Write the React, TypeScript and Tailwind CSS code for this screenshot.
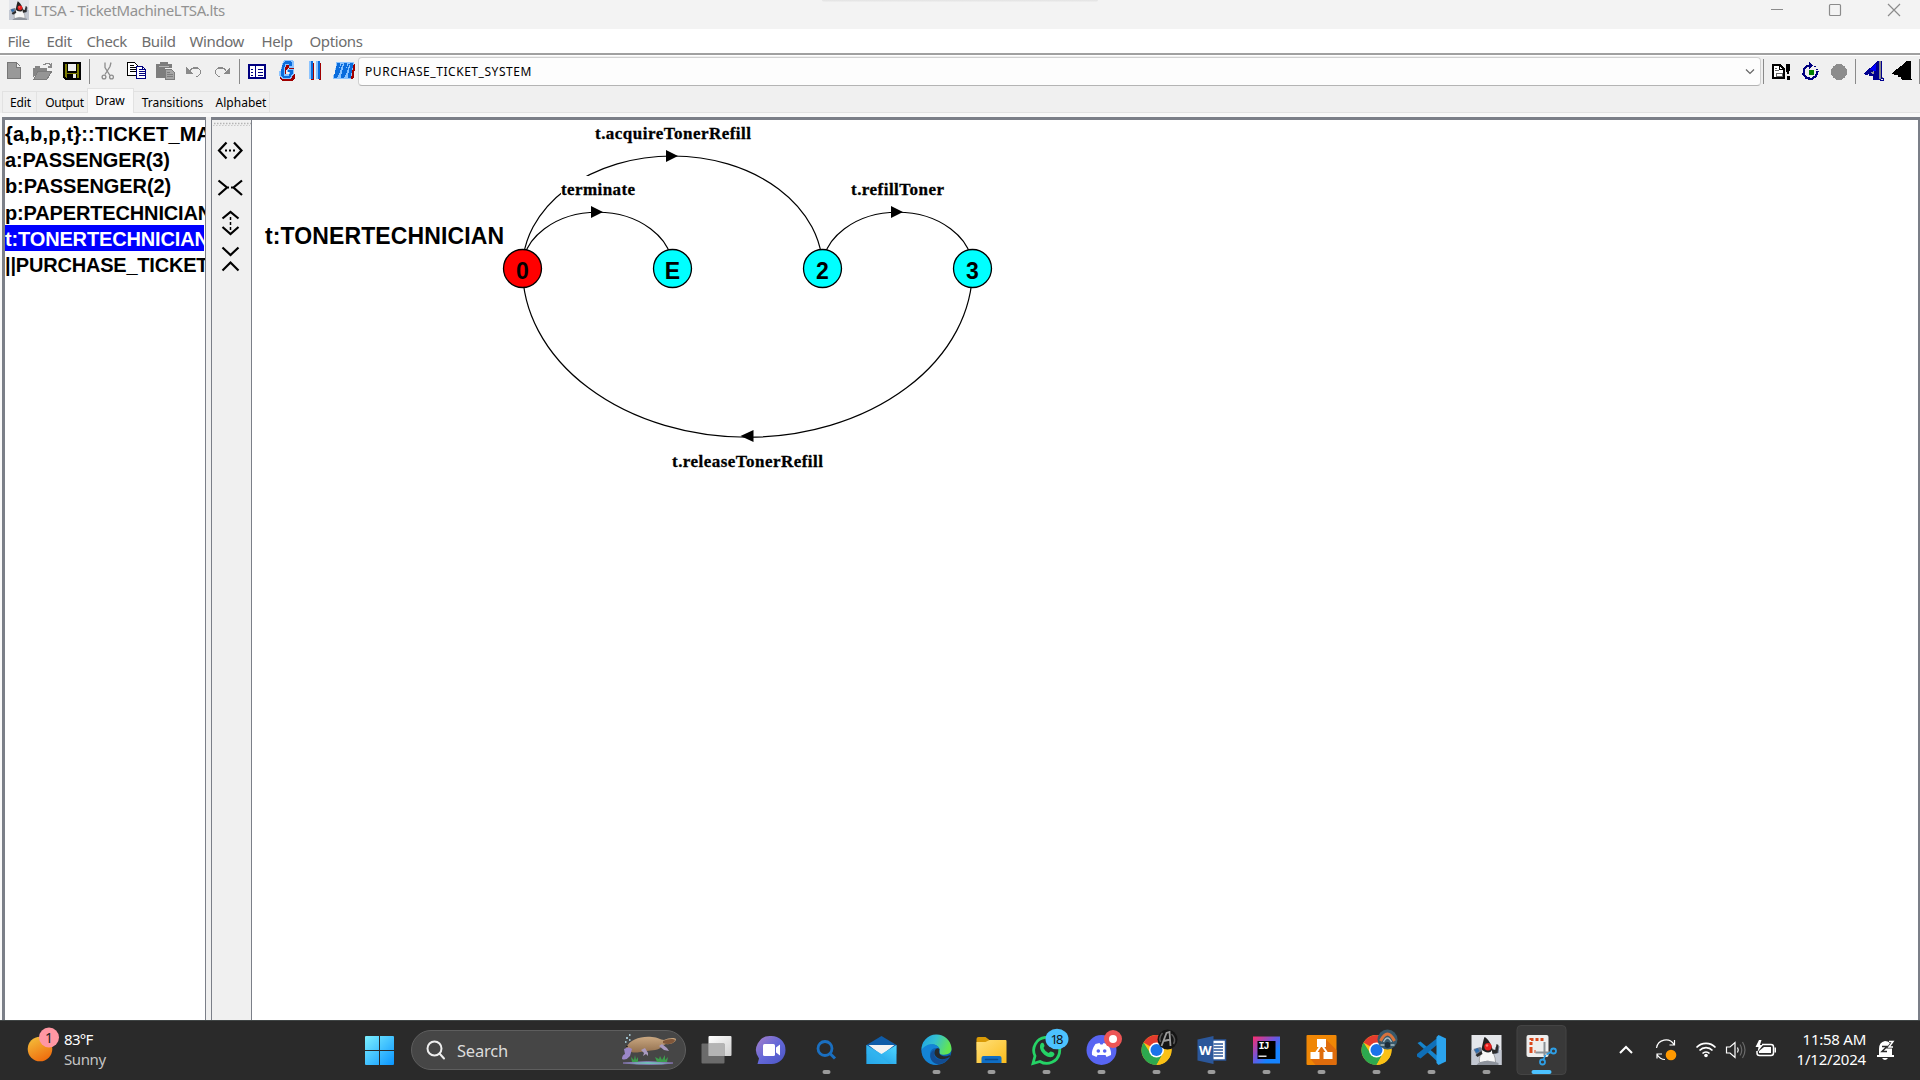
import React from "react";

type SlotProps = { x: number; w: number; children?: React.ReactNode };

// Toolbar cell; drawing units are window pixels, the bar spans y 56-88.
const Cell = ({ x, w, children }: SlotProps) => (
  <svg className="shrink-0" width={w} height={32} viewBox={`${x} 56 ${w} 32`} shapeRendering="crispEdges">
    {children}
  </svg>
);

const Sep = ({ x, w, at }: { x: number; w: number; at: number }) => (
  <Cell x={x} w={w}>
    <rect x={at} y={59} width={1} height={25} fill="#8a8a8a" />
  </Cell>
);

const menus: [string, string][] = [
  ["File", "w-[39px]"],
  ["Edit", "w-[40px]"],
  ["Check", "w-[55px]"],
  ["Build", "w-[48px]"],
  ["Window", "w-[72px]"],
  ["Help", "w-[48px]"],
  ["Options", "w-[60px]"],
];

const processes: [string, string][] = [
  ["{a,b,p,t}::TICKET_MACHINE", "leading-[26px] tracking-[0.2px]"],
  ["a:PASSENGER(3)", "leading-[26px] tracking-[-0.1px]"],
  ["b:PASSENGER(2)", "leading-[27px] tracking-[-0.1px]"],
  ["p:PAPERTECHNICIAN", "leading-[28px] tracking-[-0.15px]"],
  ["t:TONERTECHNICIAN", "leading-[28px] tracking-[-0.15px]"],
  ["||PURCHASE_TICKET_SYSTEM", "leading-[28px] tracking-[-0.2px]"],
];

function Duke() {
  return (
    <>
      <rect x={0} y={0} width={30} height={30} fill="#e4e6ea" />
      <rect x={0} y={15} width={30} height={15} fill="#c3c8d2" />
      <path d="M2 14l7-2 2 5-6 3zM24 12l4-1-1 7-4 1z" fill="#6f7c92" />
      <path d="M3 15l3-2 2 3-3 2z" fill="#2f6fb0" />
      <path d="M11 13c-1 6-4 9-3 14 3 2 6-1 8-1s6 3 8 1c0-6-3-9-4-14z" fill="#f7f7f7" stroke="#777" strokeWidth={0.6} />
      <path d="M13 2c1 0 6 4 8 12l-2 3c-3 1-7 0-9-3 1-3 1-6 3-12z" fill="#222" />
      <path d="M10 16l-6 4 2 2 5-3zM20 14l4 1 1-6 2 1-1 8-5 1z" fill="#2b2b2b" />
      <circle cx={16.5} cy={11.8} r={3.7} fill="#e8201e" />
      <circle cx={15.5} cy={10.5} r={1.2} fill="#ff7a70" />
      <path d="M7 28c5-3 15-2 20 0v2H5z" fill="#8e939c" />
    </>
  );
}

function Toolbar() {
  return (
    <div className="flex h-8 bg-[#f0f0f0]">
      <Cell x={0} w={28}>
        <path d="M7 62h9v5h5v12H7z" fill="#999" />
        <path d="M16.500 62.500l4 4M7.500 62.500h9v4.500h4v11.500h-13z" fill="none" stroke="#777" />
      </Cell>
      <Cell x={28} w={30}>
        <path d="M33 68h2v-2h5v2h7v4h-9l-5 6z" fill="#858585" />
        <path d="M38 71h14l-5 8H34z" fill="#959595" stroke="#7c7c7c" />
        <path d="M43 64.500h2v-1.500h4v1.500h1.500v2h-3M51.500 63v4h-4" fill="none" stroke="#8a8a8a" />
      </Cell>
      <Cell x={58} w={28}>
        <path d="M63 62h18v18H65l-2-2z" fill="#000" />
        <path d="M65 64h2v9h10v-9h2v14H66l-1-1z" fill="#7c7c00" />
        <rect x={68} y={64} width={8} height={7} fill="#f0f0f0" />
        <rect x={67} y={74} width={10} height={4} fill="#000" />
        <rect x={73} y={74} width={3} height={4} fill="#e8e8e8" />
      </Cell>
      <Sep x={86} w={8} at={89} />
      <Cell x={94} w={27}>
        <g fill="none" stroke="#8c8c8c" strokeWidth={1.300} shapeRendering="auto">
          <path d="M105 62.500v5l5 8M111 62.500l-1 4-5 8" />
          <circle cx={104} cy={77} r={1.900} />
          <circle cx={111.500} cy={77} r={1.900} />
        </g>
      </Cell>
      <Cell x={121} w={30}>
        <path d="M127.500 62.500h7l3 3v10h-10z" fill="#fff" stroke="#000" />
        <path d="M129.500 65.500h4M129.500 67.500h6M129.500 69.500h6M129.500 71.500h6" stroke="#000" />
        <path d="M136.500 66.500h6l3 3v9h-9z" fill="#fff" stroke="#000080" />
        <path d="M142.500 66.500v3h3M138.500 69.500h3M138.500 71.500h6M138.500 73.500h6M138.500 75.500h6" stroke="#000080" fill="none" />
      </Cell>
      <Cell x={151} w={29}>
        <path d="M156 64h4v-2h8v2h4v4h-7v10h-9z" fill="#7d7d7d" />
        <path d="M159 66.500h10" stroke="#b5b5b5" />
        <path d="M165.500 69.500h6l3 3v7h-9z" fill="#a5a5a5" stroke="#7d7d7d" />
        <path d="M167 72.500h3M167 74.500h6M167 76.500h6" stroke="#7d7d7d" />
      </Cell>
      <Cell x={180} w={28}>
        <path d="M186 67v7h7l-2.500-2.500z" fill="#8a8a8a" />
        <path d="M190 70.500l3-2.500h5l2.500 2.500v3l-3 3h-1.500" fill="none" stroke="#8a8a8a" strokeWidth={1.200} />
      </Cell>
      <Cell x={208} w={27}>
        <path d="M230 67v7h-7l2.500-2.500z" fill="#8a8a8a" />
        <path d="M226 70.500l-3-2.500h-5l-2.500 2.500v3l3 3h1.500" fill="none" stroke="#8a8a8a" strokeWidth={1.200} />
      </Cell>
      <Sep x={235} w={8} at={239} />
      <Cell x={243} w={29}>
        <rect x={249} y={65} width={16} height={13} fill="#fff" stroke="#000080" strokeWidth={2} />
        <path d="M255.500 66v12" stroke="#000080" />
        <path d="M251 69.500h2M251 72.500h2M251 75.500h2M258 69.500h5M258 72.500h5M258 75.500h5" stroke="#000080" />
      </Cell>
      <Cell x={272} w={29}>
        <path d="M286 62h8v8h-5v-3l-3 3v6h4v-2h5v4l-3 3h-10l-2-3z" fill="#a00000" />
        <path d="M284 60h8l2 2v6h-5v-3h-3l-1 4v5h4v-2h-2v-3h7v5l-3 5h-9l-3-3v-5h2l1-7z" fill="#8cc4ff" />
        <path d="M285 61h6l1 2v3h-3v-2h-4l-1 6v6h5l1-4h-2v-2h5v3l-3 5h-7l-2-3v-4l2-8z" fill="#0a6cdc" />
      </Cell>
      <Cell x={301} w={25}>
        <path d="M311 63h3v17h-3zM319 63h2v17h-2z" fill="#a00000" />
        <path d="M309 61h4v18h-4zM316 61h4v18h-4z" fill="#8cc4ff" />
        <path d="M311 61h2v18h-2zM318 61h2v18h-2z" fill="#0a6cdc" />
      </Cell>
      <Cell x={326} w={32}>
        <path d="M334 78h19l2-14h-2l-2 14h-17z" fill="#a00000" stroke="#a00000" />
        <path d="M336 62h18l-3 17h-18v-4h2z" fill="#8cc4ff" />
        <path d="M339 63l-4 15M346 63l-4 15M352 63l-3 15" stroke="#0a6cdc" strokeWidth={3} />
        <path d="M337 77l5-13M344 77l5-13" stroke="#0a6cdc" strokeWidth={1.500} />
      </Cell>
      <div className="mt-px flex h-[29px] w-[1403px] shrink-0 items-center justify-between rounded-sm border border-[#d0d0d0] border-b-[#b4b4b4] bg-[#fdfdfd] pl-[6px] pr-[5px]">
        <span className="font-['Noto_Sans'] text-[12px] leading-none tracking-[0.55px] text-black">PURCHASE_TICKET_SYSTEM</span>
        <svg width={10} height={7} viewBox="0 0 10 7" fill="none" stroke="#666" strokeWidth={1.200}>
          <path d="M1 1.500l4 4 4-4" />
        </svg>
      </div>
      <Sep x={1761} w={6} at={1763} />
      <Cell x={1767} w={29}>
        <path d="M1773 65h7l4 4v9h-11z" fill="#fff" stroke="#000" strokeWidth={1.800} />
        <path d="M1779.500 65v4h4" fill="none" stroke="#000" />
        <path d="M1775 68.500h2M1775 70.500h4M1776 73.500h6v3h-6z" fill="none" stroke="#666" />
        <path d="M1786.500 64h3.500v5l-1 5h-2l-1-5zM1786.500 76h3.500v4h-3.500z" fill="#000" />
      </Cell>
      <Cell x={1796} w={29}>
        <path d="M1806 66.500l-2 3-.5 5 3 3.500 5 1 4.500-3 1.500-5" fill="none" stroke="#000080" strokeWidth={2.300} />
        <path d="M1809 61l4 4.500-4 3.500v-2.500h-3v-2h3z" fill="#000080" />
        <path d="M1814 66h2v1h-2zM1816 69h2v1h-2z" fill="#000080" />
        <circle cx={1811.500} cy={72.500} r={2.700} fill="#008000" />
      </Cell>
      <Cell x={1825} w={27}>
        <circle cx={1839} cy={72} r={8} fill="#8c8c8c" />
      </Cell>
      <Sep x={1852} w={7} at={1855} />
      <Cell x={1859} w={29}>
        <path d="M1877 61h5v16l2 2h-7z" fill="#888" />
        <path d="M1877 61h2v18h2v1h-8v-4h-4v-2l-2 1-4-1 7-6z" fill="#000090" />
        <path d="M1876 63v8l-6-1z" fill="#0000ff" />
        <path d="M1870 73l4-2v3z" fill="#999" />
        <path d="M1881.500 61v17h2v2h-4" fill="none" stroke="#000090" />
      </Cell>
      <Cell x={1888} w={29}>
        <path d="M1907 61h4v16l1 3h-10l-1-3h-3v-2h-3l-3-1v-1l9-7z" fill="#000" />
      </Cell>
      <Sep x={1917} w={3} at={1919} />
    </div>
  );
}

function Diagram() {
  const arc = { fill: "none", stroke: "#000", strokeWidth: 1.2 };
  const nodes: [number, string, string][] = [
    [522.5, "0", "#ff0000"],
    [672.5, "E", "#00ffff"],
    [822.5, "2", "#00ffff"],
    [972.5, "3", "#00ffff"],
  ];
  const serif = "font-['Liberation_Serif',serif] font-bold text-[17px] stroke-black stroke-[0.3px]";
  return (
    <svg width={1666} height={900} viewBox="252 120 1666 900" className="block">
      <path d="M522.5 268.500A150 112.500 0 0 1 822.5 268.500" {...arc} />
      <rect x={561} y={176} width={75} height={22} fill="#fff" />
      <path d="M522.5 268.500A75 56.250 0 0 1 672.5 268.500M822.5 268.500A75 56.250 0 0 1 972.5 268.500M522.5 268.500A225 168.750 0 0 0 972.5 268.500" {...arc} />
      <path d="M666 150v12l12-6zM591 206v12l12-6zM891 206v12l12-6zM753.500 430v12l-13-6z" />
      {nodes.map(([x, label, fill]) => (
        <g key={label}>
          <circle cx={x} cy={268.500} r={19} fill={fill} stroke="#000" strokeWidth={1.300} />
          <text x={x} y={278.500} textAnchor="middle" className="font-['Liberation_Sans',sans-serif] text-[23px] font-bold">
            {label}
          </text>
        </g>
      ))}
      <text x={265} y={244} textLength={239} className="font-['Liberation_Sans',sans-serif] text-[23px] font-bold">
        t:TONERTECHNICIAN
      </text>
      <text x={595} y={139} textLength={156} className={serif}>t.acquireTonerRefill</text>
      <text x={561} y={195} textLength={74} className={serif}>terminate</text>
      <text x={851} y={195} textLength={93} className={serif}>t.refillToner</text>
      <text x={672} y={467} textLength={151} className={serif}>t.releaseTonerRefill</text>
    </svg>
  );
}

// Taskbar cell, 55px wide, with its origin at the centre of the icon.
const App55 = ({ dot, active, children }: { dot?: boolean; active?: boolean; children?: React.ReactNode }) => (
  <svg className="shrink-0" width={55} height={60} viewBox="-27.5 -30 55 60">
    {active && <rect x={-24.500} y={-24.500} width={49} height={49} rx={4} fill="#393939" stroke="#444" />}
    {children}
    {dot && <rect x={-4} y={20} width={8} height={4} rx={2} fill="#9b9b9b" />}
    {active && <rect x={-10} y={20} width={20} height={4} rx={2} fill="#4cc2ff" />}
  </svg>
);

const Chrome = () => (
  <>
    <circle r={15} fill="#fbc116" />
    <path d="M0 0L-13 -7.500A15 15 0 0 1 13 -7.500L13 -7H0z" fill="#e33b2e" />
    <path d="M-13 -7.500A15 15 0 0 0 0 15L6.500 3.500 0 0-6 3.500z" fill="#2da94f" />
    <path d="M13 -7.500A15 15 0 0 1 0 15L6.500 3.500 6 -7.500z" fill="#fbc116" />
    <circle r={7.500} fill="#fff" />
    <circle r={6} fill="#1a73e8" />
  </>
);

function Taskbar() {
  return (
    <div className="flex h-[60px] shrink-0 border-t border-[#3f4444] bg-[#2a2a2a] text-white">
      <svg width={0} height={0} className="absolute">
        <defs>
          <linearGradient id="win" x1="0" y1="0" x2="1" y2="1"><stop stopColor="#7cf0ff" /><stop offset="1" stopColor="#0a95ff" /></linearGradient>
          <linearGradient id="sun" x1="0.200" y1="0" x2="0.700" y2="1"><stop stopColor="#f3bd3a" /><stop offset="1" stopColor="#ef6a0c" /></linearGradient>
          <linearGradient id="chat" x1="0" y1="0" x2="1" y2="1"><stop stopColor="#a87fc8" /><stop offset="0.500" stopColor="#6468d8" /><stop offset="1" stopColor="#4a55c4" /></linearGradient>
          <linearGradient id="edge" x1="0" y1="0" x2="1" y2="0.300"><stop stopColor="#1ba0e8" /><stop offset="0.500" stopColor="#35c1d0" /><stop offset="1" stopColor="#62e552" /></linearGradient>
          <linearGradient id="fold" x1="0" y1="0" x2="1" y2="1"><stop stopColor="#ffe07a" /><stop offset="1" stopColor="#fbbc1c" /></linearGradient>
          <linearGradient id="mail" x1="0" y1="1" x2="1" y2="0"><stop stopColor="#1590e0" /><stop offset="1" stopColor="#50d8ff" /></linearGradient>
          <linearGradient id="ij" x1="0" y1="0" x2="1" y2="1"><stop stopColor="#ff2d6c" /><stop offset="0.450" stopColor="#6b57e0" /><stop offset="0.700" stopColor="#1683ff" /></linearGradient>
          <linearGradient id="tv" x1="0" y1="0" x2="1" y2="1"><stop stopColor="#fff" /><stop offset="1" stopColor="#d0d0d0" /></linearGradient>
          <linearGradient id="fur" x1="0" y1="0" x2="0" y2="1"><stop stopColor="#c9a781" /><stop offset="1" stopColor="#93704f" /></linearGradient>
        </defs>
      </svg>
      <svg className="-mt-px shrink-0" width={62} height={60} viewBox="0 1020 62 60">
        <circle cx={40} cy={1049} r={12.300} fill="url(#sun)" />
        <circle cx={49} cy={1037.500} r={10} fill="#ff97a3" />
        <text x={49} y={1043} textAnchor="middle" className="font-['Noto_Sans'] text-[14px]" fill="#222">1</text>
      </svg>
      <div className="w-[290px] shrink-0 pl-[2px] pt-[8px] font-['Noto_Sans'] text-[15px] leading-[20px]">
        <div className="tracking-[-0.7px]">83°F</div>
        <div className="tracking-[-0.4px] text-[#c4c4c4]">Sunny</div>
      </div>
      <svg className="-mt-px shrink-0" width={59} height={60} viewBox="352 1020 59 60">
        <path d="M366 1036h13v14h-14v-13q0-1 1-1zM380 1036h13q1 0 1 1v13h-14zM365 1051h14v14h-13q-1 0-1-1zM380 1051h14v13q0 1-1 1h-13z" fill="url(#win)" />
      </svg>
      <div className="mt-[9px] flex h-10 w-[275px] shrink-0 items-center rounded-full border border-[#5e5e5e] bg-[#464646] pl-[14px]">
        <svg width={20} height={20} viewBox="0 0 20 20" fill="none" stroke="#eee" strokeWidth={2} strokeLinecap="round">
          <circle cx={8.500} cy={8.500} r={7} />
          <path d="M13.500 13.500l4.500 5" />
        </svg>
        <span className="ml-[11px] mt-[2px] font-['Noto_Sans'] text-[16.5px] leading-none tracking-[-0.2px] text-[#dcdcdc]">Search</span>
        <svg className="ml-[113px]" width={56} height={34} viewBox="0 0 56 34">
          <path d="M2 30q24-3 50 0-20 3-50 0z" fill="#6fc2b8" stroke="#8b74b8" strokeWidth={0.800} />
          <path d="M11 29l-1-5 3 3 1-5 1 5 2-3v5zM36 29l-2-5 4 2 1-3 2 4 3-5v5l3-3-1 5z" fill="#3c9c4c" />
          <path d="M5 15C9 6 20 3 31 4c6 0 8 3 12 3 4-2 10-3 12-1 0 3-5 6-10 5l-4 2c-3 5-10 4-15 5-8 1-14 3-17 0z" fill="url(#fur)" />
          <path d="M42 8c4-2 10-3 12-1-1 4-8 5-12 3z" fill="#80573a" />
          <path d="M3 16q5-3 8 0l-2 7q-4 5-8 3 0-4 3-5z" fill="#9b87c8" />
          <path d="M20 17l3 3-1 3 3-2 2 2v-3l-3-5zM38 13l5 4 5 1-2-3-5-4z" fill="#a99ac0" />
          <circle cx={6} cy={13.500} r={0.800} fill="#111" />
          <path d="M5 5h2M8 2h1.500M4 9h1.500M8 7h1.500" stroke="#b9e5f5" strokeWidth={1.600} />
        </svg>
      </div>
      <div className="-mt-px ml-[2.5px] flex shrink-0">
        <App55>
          <rect x={-8} y={-14} width={23} height={20} rx={1} fill="url(#tv)" />
          <rect x={-15} y={-6.500} width={23} height={20} rx={1} fill="#777" opacity={0.850} />
          <rect x={-8} y={-6.500} width={16} height={12.500} fill="#b4b4b4" />
        </App55>
        <App55>
          <path d="M0-14a14 14 0 1 1 0 28H-14l1.500-5.500A14 14 0 0 1 0-14z" fill="url(#chat)" />
          <rect x={-8.500} y={-6} width={12} height={12} rx={1.500} fill="#fff" />
          <path d="M4.500-2.500L8.500-5.500V5.500L4.500 2.500z" fill="#fff" />
        </App55>
        <App55 dot>
          <circle cx={-1.500} cy={-1.500} r={7} fill="none" stroke="#1a6fc0" strokeWidth={2.800} />
          <path d="M3.500 3.500L8.500 8.500" stroke="#1a6fc0" strokeWidth={3} />
        </App55>
        <App55>
          <path d="M-15-5L0-14 15-5V4H-15z" fill="#0f5ca8" />
          <path d="M-13-5H13L0 5z" fill="#f3f3f3" />
          <path d="M-15-5L0 4 15-5V14H-15z" fill="url(#mail)" />
          <path d="M-15-5L8 14H-15z" fill="#34b8f0" opacity={0.600} />
        </App55>
        <App55 dot>
          <circle r={15} fill="#0c62b4" />
          <path d="M-15 0A15 15 0 0 1 15-1C15 3 11 5.500 5 4.500 2 4 4 2 3-1 1-6-6-8-15 0z" fill="url(#edge)" />
          <path d="M-15 0C-10-8 1-7 3-1-3-4-8 1-6 7c1 4 5 7 8 8C-8 16-15 9-15 0z" fill="#1484d6" />
          <path d="M-2 0C-5 9 4 12 13 7.500 8 15-3 17-6 8-7 4-4 0-2 0z" fill="#134d93" />
          <path d="M3-1C0-4-4 2-1 6 3 11 10 9 13 7c2-2 0-2-2-1C6 7 1 5 3-1z" fill="#272a2c" />
        </App55>
        <App55 dot>
          <path d="M-15-11q0-2 2-2h7l4 3H14V0H-15z" fill="#d99a06" />
          <path d="M-15-8h9l4-2H14q1 0 1 1V13H-15z" fill="url(#fold)" />
          <path d="M-10 13V8q0-2 2-2H8q2 0 2 2v5z" fill="#0f6ec4" />
          <path d="M-6 9.500H6" stroke="#084a8c" strokeWidth={1.500} strokeLinecap="round" />
        </App55>
        <App55 dot>
          <path d="M-13.500 13.500L-11.500 6A13 13 0 1 1-6.500 11.500z" fill="none" stroke="#25d366" strokeWidth={2.800} />
          <path d="M-6-6c2-3 4 0 4 2l-1 2c1 2 3 4 5 5l2-1.500c2 0 4 1 4 3-2 4-6 3-9 1S-8-1-6-6z" fill="#25d366" />
          <ellipse cx={10.500} cy={-11} rx={11.500} ry={10.300} fill="#4cc2ff" />
          <text x={10.500} y={-6} textAnchor="middle" className="font-['Noto_Sans'] text-[13px]" fill="#111" textLength={13}>18</text>
        </App55>
        <App55 dot>
          <circle r={15} fill="#5865f2" />
          <path d="M-6-6l4-1 1 1.500h2L2-7l4 1C9-2 10 3 9.500 5L5 7 4 5h-8l-1 2-4.500-2C-10 2-9-2-6-6z" fill="#fff" />
          <circle cx={-3.200} cy={1} r={1.800} fill="#5865f2" />
          <circle cx={3.200} cy={1} r={1.800} fill="#5865f2" />
          <circle cx={11.500} cy={-11} r={9} fill="#ed5555" />
          <circle cx={11.500} cy={-11} r={4} fill="#fff" />
        </App55>
        <App55 dot>
          <Chrome />
          <circle cx={11} cy={-10.500} r={10} fill="#151515" />
          <path d="M5-4l5-13 3-1 1 14M7-9l7-1.500" fill="none" stroke="#9a9a9a" strokeWidth={1.800} />
          <path d="M15-16q5 5 2 10M6-17q-4 5-2 9" fill="none" stroke="#5a5a5a" strokeWidth={1.500} />
        </App55>
        <App55 dot>
          <rect x={-2} y={-10} width={16} height={20} fill="#fff" stroke="#2b579a" strokeWidth={1.500} />
          <path d="M2-6h9.500M2-3h9.500M2 0h9.500M2 3h9.500M2 6h9.500" stroke="#2b579a" strokeWidth={1.500} />
          <path d="M-14-10.500L2-14V14L-14 10.500z" fill="#2b579a" />
          <text x={-6.200} y={5} textAnchor="middle" className="font-['Open_Sans'] text-[13px] font-bold" fill="#fff">W</text>
        </App55>
        <App55 dot>
          <rect x={-13.500} y={-13.500} width={27} height={27} fill="url(#ij)" />
          <rect x={-9} y={-9} width={18} height={18} fill="#000" />
          <text x={-8} y={-1} className="font-['Liberation_Mono'] text-[10px] font-bold" textLength={11} fill="#fff">IJ</text>
          <rect x={-8} y={5.500} width={8} height={1.500} fill="#ddd" />
        </App55>
        <App55 dot>
          <rect x={-15} y={-15} width={30} height={30} rx={1} fill="#f08705" />
          <path d="M4-11l11 11V14q0 1-1 1H-6l-5-6z" fill="#df6c0c" />
          <path d="M-1-4l-6 9M1-4l6 9" stroke="#fff" strokeWidth={2} />
          <path d="M-4.500-11h9v8h-9zM-11 2h9v7h-9zM2 2h9v7H2z" fill="#fff" />
        </App55>
        <App55 dot>
          <Chrome />
          <circle cx={11} cy={-10.500} r={10} fill="#38586a" />
          <path d="M4-9q7-14 14 0" fill="none" stroke="#d8723c" strokeWidth={3} />
          <path d="M7-8q4-8 8 0M4-5h14" fill="none" stroke="#a8bcc4" strokeWidth={1.300} />
          <circle cx={11} cy={-5} r={3} fill="#1e2e3a" />
        </App55>
        <App55 dot>
          <path d="M-14-7L-11-8.500 9 8.500V14.500z" fill="#1684cc" />
          <path d="M-14.500 6.500L-11 8.500 9-8V-14.500L-14.500 4z" fill="#0f6fb8" />
          <path d="M7-15L14.500-11.500V11.500L7 15 5 13V-13z" fill="#2ba4ee" />
        </App55>
        <App55 dot>
          <g transform="translate(-15 -15)"><Duke /></g>
        </App55>
        <App55 active>
          <rect x={-15} y={-15} width={22} height={22} rx={2} fill="#eeeeee" />
          <path d="M-10.500 0V-10.500H3" fill="none" stroke="#d9481c" strokeWidth={3} strokeDasharray="3 2" />
          <path d="M-12 1.500h6" stroke="#d9481c" strokeWidth={3} strokeDasharray="3 2" />
          <path d="M3-8V6M-6 2.500H9" stroke="#8b9196" strokeWidth={2} />
          <circle cx={12} cy={1} r={2.500} fill="none" stroke="#2e9fe6" strokeWidth={1.800} />
          <circle cx={1} cy={12} r={2.500} fill="none" stroke="#2e9fe6" strokeWidth={1.800} />
          <path d="M9.500 2L5 4.500M2 9.500L4 5" stroke="#2e9fe6" strokeWidth={1.800} />
        </App55>
      </div>
      <svg className="-mt-px ml-auto shrink-0" width={182} height={60} viewBox="1608 1020 182 60" fill="none" stroke="#fff" strokeWidth={1.500}>
        <path d="M1620 1053l6-6 6 6" strokeWidth={2} />
        <path d="M1656.500 1048a9.500 9.500 0 0 1 17.500-3.500M1674.500 1040v5h-5M1657 1058.500v-4.500h5M1657 1054.500q3 5 8 5" strokeWidth={1.200} />
        <circle cx={1671} cy={1055} r={5.300} fill="#ff9900" stroke="none" />
        <path d="M1696.500 1047.500a13 13 0 0 1 19 0M1699.500 1050.500a9 9 0 0 1 13 0M1702.500 1053.500a5 5 0 0 1 7 0" strokeWidth={1.700} />
        <circle cx={1706} cy={1055.500} r={1.800} fill="#fff" stroke="none" />
        <path d="M1726.500 1047h3.500l5-4.500v15l-5-4.500h-3.500z" strokeWidth={1.200} />
        <path d="M1737.500 1047.500q1.500 2.500 0 5" strokeWidth={1.200} />
        <path d="M1740 1044.500q3.500 5.500 0 11M1742.500 1042q5 8 0 16" stroke="#6a6a6a" strokeWidth={1.200} />
        <path d="M1762 1044.500h9q2.500 0 2.500 2.500v6q0 2.500-2.500 2.500h-11.500q-2.500 0-2.500-2.500v-2" />
        <path d="M1764 1047h7v6h-12v-2zM1774.500 1047.500h1.500v5h-1.500z" fill="#fff" stroke="none" />
        <path d="M1759 1040l-3.500 7h3l-1 5 5.500-7h-3l1.500-5z" fill="#fff" stroke="none" />
      </svg>
      <div className="w-[76px] shrink-0 pt-[8px] text-right font-['Noto_Sans'] text-[15px] leading-[20px]">
        <div className="tracking-[-0.25px]">11:58 AM</div>
        <div className="tracking-[-0.2px]">1/12/2024</div>
      </div>
      <svg className="-mt-px shrink-0" width={54} height={60} viewBox="1866 1020 54 60">
        <path d="M1877 1055h2v-6q0-7 6-8 6 0 7 7v7h2v2h-17zM1882 1058h6q-3 4-6 0z" fill="#fff" />
        <path d="M1882 1046.500h5l-5 5h5" fill="none" stroke="#2a2a2a" strokeWidth={1.500} />
        <path d="M1889 1041.500h4l-4 5.500h4" fill="none" stroke="#2a2a2a" strokeWidth={3} />
        <path d="M1889 1041.500h4l-4 5.500h4" fill="none" stroke="#fff" strokeWidth={1.500} />
      </svg>
    </div>
  );
}

const tabText = "font-['Noto_Sans'] text-[12px] leading-none text-black";

export default function App() {
  return (
    <div className="flex h-[1080px] w-[1920px] flex-col overflow-hidden bg-[#f0f0f0]">
      <div className="flex h-[29px] shrink-0 bg-[#f3f3f3]">
        <svg className="ml-[9px] shrink-0" width={20} height={20} viewBox="0 0 30 30"><Duke /></svg>
        <span className="ml-[5px] w-[300px] font-['Noto_Sans'] text-[15px] leading-[20px] tracking-[-0.4px] text-[#929292]">LTSA - TicketMachineLTSA.lts</span>
        <div className="ml-[488px] h-[2px] w-[276px] rounded-b bg-gradient-to-b from-[#e2e2e2] to-[#f0f0f0]" />
        <svg className="ml-auto shrink-0" width={160} height={29} viewBox="1760 0 160 29" fill="none" stroke="#8b8b8b" strokeWidth={1.200}>
          <path d="M1771 9.500h12M1888 4l12 12M1900 4l-12 12" />
          <rect x={1829.500} y={4.500} width={11} height={11} rx={1} />
        </svg>
      </div>
      <div className="flex h-6 shrink-0 bg-white pl-[7.5px]">
        {menus.map(([name, w]) => (
          <span key={name} className={`${w} shrink-0 font-['Noto_Sans'] text-[15px] leading-[25px] tracking-[-0.4px] text-[#6d6d6d]`}>
            {name}
          </span>
        ))}
      </div>
      <div className="h-[3px] shrink-0 border-b border-white bg-[#a0a0a0]" />
      <Toolbar />
      <div className="flex h-[25px] shrink-0 items-end">
        <div className="ml-[2px] flex h-[22px] w-[35px] items-center justify-center border border-[#e2e2e2]"><span className={`${tabText} ml-[2px] mt-[2px] tracking-[-0.1px]`}>Edit</span></div>
        <div className="flex h-[22px] w-[50px] items-center justify-center border-y border-[#e2e2e2]"><span className={`${tabText} ml-[5px] mt-[2px] tracking-[-0.3px]`}>Output</span></div>
        <div className="flex h-[25px] w-[47px] items-center justify-center border border-b-0 border-[#e2e2e2] bg-[#f9f9f9]"><span className={`${tabText} -ml-px tracking-[-0.05px]`}>Draw</span></div>
        <div className="flex h-[22px] w-[77px] items-center justify-center border-y border-[#e2e2e2]"><span className={`${tabText} mt-[2px]`}>Transitions</span></div>
        <div className="flex h-[22px] w-[59px] items-center justify-center border border-l-0 border-[#e2e2e2]"><span className={`${tabText} ml-[2px] mt-[2px]`}>Alphabet</span></div>
        <div className="h-px flex-1 bg-[#e2e2e2]" />
      </div>
      <div className="h-[4px] shrink-0 bg-[#f9f9f9]" />
      <div className="flex min-h-0 flex-1">
        <div className="w-[2px] shrink-0 bg-[#f9f9f9]" />
        <div className="w-[204px] shrink-0 overflow-hidden border-l-[3px] border-r border-t-[3px] border-[#7b7f88] bg-white pt-px">
          {processes.map(([name, type], i) => (
            <div
              key={name}
              className={`h-[26px] whitespace-nowrap font-['Liberation_Sans'] text-[20px] font-bold ${type} ${i === 4 ? "mr-px overflow-hidden bg-[#0000ff] text-white" : "text-black"}`}
            >
              {name}
            </div>
          ))}
        </div>
        <div className="w-[5px] shrink-0 bg-[#f0f0f0]" />
        <div className="flex min-w-0 flex-1 border-l border-r-2 border-t-[3px] border-[#7b7f88]">
          <div className="w-[40px] shrink-0 border-r border-[#7b7f88] bg-[#f0f0f0]">
            <svg width={39} height={160} viewBox="212 120 39 160" fill="none" stroke="#000" strokeWidth={2.200}>
              <path d="M214 123.500H251" stroke="#b4b4b4" strokeWidth={1.500} strokeDasharray="1.500 1.500" />
              <path d="M213 125.500H250" stroke="#c8c8c8" strokeWidth={1} strokeDasharray="1.500 1.500" />
              <path d="M226.500 142.500l-7.500 8 7.500 8M234 142.500l7.500 8-7.500 8" />
              <path d="M225 150.500h2M229 150.500h2M233 150.500h2" />
              <path d="M218.500 180.500l8.500 7-8.500 7.500M242 180.500l-8.500 7 8.500 7.500M226 187.500h3M231 187.500h3" />
              <path d="M222.500 218.500l8-6.500 8 6.500M222.500 227l8 7 8-7" />
              <path d="M230.500 217v3M230.500 222v3M230.500 227v3" strokeWidth={1.500} />
              <path d="M222.500 247.500l8 7.500 8-7.500M222.500 270.500l8-8 8 8" />
            </svg>
          </div>
          <div className="min-w-0 flex-1 overflow-hidden bg-white">
            <Diagram />
          </div>
        </div>
      </div>
      <Taskbar />
    </div>
  );
}
